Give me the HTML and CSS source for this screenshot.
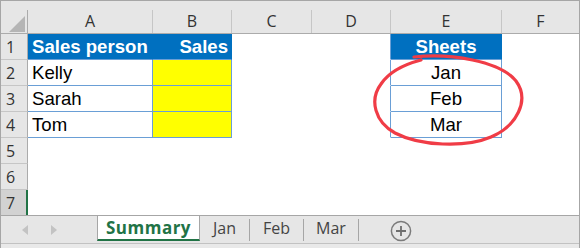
FILE: index.html
```html
<!DOCTYPE html>
<html lang="en">
<head>
<meta charset="utf-8">
<title>Sheets</title>
<link rel="stylesheet" href="styles.css">
</head>
<body>
<div class="sheet">
  <div class="grid">
    <div class="ch corner"><span><svg class="tri" width="16" height="16" viewBox="0 0 16 16"><polygon points="16,0 16,16 0,16" fill="#b5b5b5"/></svg></span></div>
    <div class="ch"><span>A</span></div>
    <div class="ch"><span>B</span></div>
    <div class="ch"><span>C</span></div>
    <div class="ch"><span>D</span></div>
    <div class="ch"><span>E</span></div>
    <div class="ch last"><span>F</span></div>

    <div class="rh">1</div>
    <div class="c hdr">Sales person</div>
    <div class="c hdr right">Sales</div>
    <div class="c"></div>
    <div class="c edge"></div>
    <div class="c hdr center">Sheets</div>
    <div class="c"></div>

    <div class="rh">2</div>
    <div class="c tb">Kelly</div>
    <div class="c tb yel"></div>
    <div class="c"></div>
    <div class="c edge"></div>
    <div class="c tb center">Jan</div>
    <div class="c"></div>

    <div class="rh">3</div>
    <div class="c tb">Sarah</div>
    <div class="c tb yel"></div>
    <div class="c"></div>
    <div class="c edge"></div>
    <div class="c tb center">Feb</div>
    <div class="c"></div>

    <div class="rh">4</div>
    <div class="c tb">Tom</div>
    <div class="c tb yel"></div>
    <div class="c"></div>
    <div class="c edge"></div>
    <div class="c tb center">Mar</div>
    <div class="c"></div>

    <div class="rh">5</div>
    <div class="c"></div><div class="c"></div><div class="c"></div><div class="c"></div><div class="c"></div><div class="c"></div>

    <div class="rh">6</div>
    <div class="c"></div><div class="c"></div><div class="c"></div><div class="c"></div><div class="c"></div><div class="c"></div>

    <div class="rh sel">7</div>
    <div class="c"></div><div class="c"></div><div class="c"></div><div class="c"></div><div class="c"></div><div class="c"></div>
  </div>

  <div class="tabs">
    <div class="nav">
      <svg class="arr" width="6" height="10" viewBox="0 0 6 10"><polygon points="6,0 6,10 0,5" fill="#c3c3c3"/></svg>
      <svg class="arr" width="6" height="10" viewBox="0 0 6 10"><polygon points="0,0 0,10 6,5" fill="#c3c3c3"/></svg>
    </div>
    <div class="tab active t-sum">Summary</div>
    <div class="tab t-jan">Jan</div>
    <div class="sep"></div>
    <div class="tab t-feb">Feb</div>
    <div class="sep"></div>
    <div class="tab t-mar">Mar</div>
    <div class="sep"></div>
    <div class="add">
      <svg width="22" height="22" viewBox="0 0 22 22"><circle cx="11" cy="11" r="9.6" fill="none" stroke="#7b7b7b" stroke-width="1.5"/><path d="M6 11H16M11 6V16" stroke="#6e6e6e" stroke-width="1.8"/></svg>
    </div>
  </div>

  <svg class="mark" width="581" height="248" viewBox="0 0 581 248">
    <path d="M414 57 C450 53 500 61 516 81 C530 100 517 126 491 137 C465 148 420 146 395 133 C375 122 369 100 381 84 C389 72 402 65 421 60" fill="none" stroke="#f03c46" stroke-width="3.2" stroke-linecap="round"/>
  </svg>
</div>
</body>
</html>
```

FILE: styles.css
```css
* { box-sizing: border-box; }

body {
  margin: 0;
  background: #ffffff;
}

.sheet {
  position: relative;
  width: 580px;
  height: 248px;
  border-left: 1px solid #a6a6a6;
  border-top: 1px solid #a6a6a6;
  border-right: 1px solid #a6a6a6;
  background: #e9e9e9;
  overflow: hidden;
}

.grid {
  display: grid;
  grid-template-columns: 27px 125px 79px 80px 79px 111px 77px;
  grid-template-rows: 33px repeat(6, 26px) 25px;
  background: #ffffff;
}

.ch {
  background: #e6e6e6;
  border-bottom: 1px solid #ababab;
  display: flex;
  align-items: flex-end;
}

.ch span {
  flex: 1;
  height: 23px;
  border-right: 1px solid #c6c6c6;
  text-align: center;
  font: 16px/23px "Open Sans", sans-serif;
  color: #333333;
}

.ch.last span { border-right: none; }

.corner span {
  display: flex;
  justify-content: flex-end;
  align-items: flex-end;
  padding: 0 2px 1px 0;
  border-right-color: #ababab;
}

.tri { display: block; }

.rh {
  background: #e6e6e6;
  border-right: 1px solid #ababab;
  border-bottom: 1px solid #c6c6c6;
  font: 16px/1 "Open Sans", sans-serif;
  color: #333333;
  padding-left: 5px;
  display: flex;
  align-items: center;
}

.rh.sel {
  background: #d2d2d2;
  border-right: 2px solid #217346;
  border-bottom: none;
}

.c {
  background: #ffffff;
  border-right: 1px solid #ffffff;
  border-bottom: 1px solid #ffffff;
  font: 18.6px/1 "Liberation Sans", Arial, sans-serif;
  color: #000000;
  display: flex;
  align-items: center;
  padding: 1px 4px 0 4px;
  white-space: nowrap;
}

.c.hdr {
  background: #0070c0;
  border-right-color: #0070c0;
  border-bottom-color: #6a9fd6;
  color: #ffffff;
  font-weight: bold;
}

.c.tb {
  border-right-color: #6a9fd6;
  border-bottom-color: #6a9fd6;
}

.c.edge { border-right-color: #6a9fd6; }

.c.yel { background: #ffff00; }

.c.right { justify-content: flex-end; padding-right: 3px; }

.c.center { justify-content: center; }

.tabs {
  height: 29px;
  border-top: 1px solid #a6a6a6;
  border-bottom: 1px solid #c2c2c2;
  background: #e6e6e6;
  display: flex;
  align-items: flex-start;
  font-family: "Open Sans", sans-serif;
}

.nav {
  width: 96px;
  height: 27px;
  display: flex;
  align-items: center;
  padding: 0 0 0 21px;
  gap: 23px;
}

.arr { display: block; }

.tab {
  height: 25px;
  text-align: center;
  font-size: 16px;
  line-height: 24px;
  color: #444444;
  white-space: nowrap;
}

.tab.active {
  background: #ffffff;
  border-left: 1px solid #a6a6a6;
  border-right: 1px solid #a6a6a6;
  border-bottom: 2px solid #217346;
  color: #217346;
  font-size: 17px;
  font-weight: bold;
  letter-spacing: 0.5px;
  line-height: 23px;
}

.t-sum { width: 103px; }
.t-jan { width: 49px; }
.t-feb { width: 53px; }
.t-mar { width: 54px; }

.sep {
  width: 1px;
  height: 22px;
  margin-top: 3px;
  background: #a6a6a6;
}

.add {
  margin-left: 31px;
  padding-top: 4px;
}

.add svg { display: block; }

.mark {
  position: absolute;
  left: -1px;
  top: -1px;
  pointer-events: none;
}
```
